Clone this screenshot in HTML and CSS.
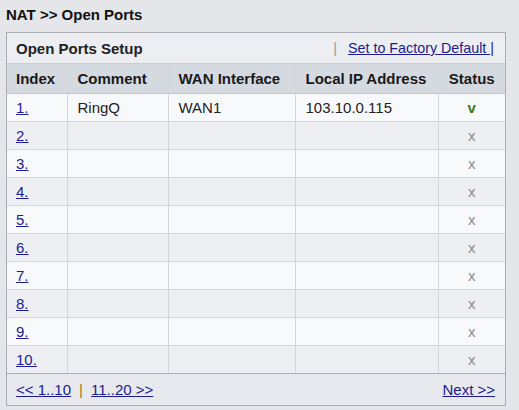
FILE: index.html
```html
<!DOCTYPE html>
<html lang="en">
<head>
	<meta charset="UTF-8">
	<title>NAT - Open Ports</title>
	<link rel="stylesheet" href="styles.css">
</head>
<body>
<h1 class="title">NAT &gt;&gt; Open Ports</h1>
<div class="panel">
	<div class="panel-head">
		<span class="panel-name">Open Ports Setup</span>
		<span class="panel-tools"><span class="sep">|</span><a href="#">Set to Factory Default |</a></span>
	</div>
	<table class="ports">
		<thead>
			<tr>
				<th class="c-idx">Index</th>
				<th class="c-cmt">Comment</th>
				<th class="c-wan">WAN Interface</th>
				<th class="c-ip">Local IP Address</th>
				<th class="c-st">Status</th>
			</tr>
		</thead>
		<tbody>
			<tr><td class="c-idx"><a href="#">1.</a></td><td>RingQ</td><td>WAN1</td><td>103.10.0.115</td><td class="c-st on">v</td></tr>
			<tr><td class="c-idx"><a href="#">2.</a></td><td></td><td></td><td></td><td class="c-st">x</td></tr>
			<tr><td class="c-idx"><a href="#">3.</a></td><td></td><td></td><td></td><td class="c-st">x</td></tr>
			<tr><td class="c-idx"><a href="#">4.</a></td><td></td><td></td><td></td><td class="c-st">x</td></tr>
			<tr><td class="c-idx"><a href="#">5.</a></td><td></td><td></td><td></td><td class="c-st">x</td></tr>
			<tr><td class="c-idx"><a href="#">6.</a></td><td></td><td></td><td></td><td class="c-st">x</td></tr>
			<tr><td class="c-idx"><a href="#">7.</a></td><td></td><td></td><td></td><td class="c-st">x</td></tr>
			<tr><td class="c-idx"><a href="#">8.</a></td><td></td><td></td><td></td><td class="c-st">x</td></tr>
			<tr><td class="c-idx"><a href="#">9.</a></td><td></td><td></td><td></td><td class="c-st">x</td></tr>
			<tr><td class="c-idx"><a href="#">10.</a></td><td></td><td></td><td></td><td class="c-st">x</td></tr>
		</tbody>
	</table>
	<div class="panel-foot">
		<span class="pager"><a href="#">&lt;&lt; 1..10</a><span class="bar">|</span><a href="#">11..20 &gt;&gt;</a></span>
		<a href="#">Next &gt;&gt;</a>
	</div>
</div>
</body>
</html>
```

FILE: styles.css
```css
* {
	margin: 0;
	padding: 0;
	box-sizing: border-box;
}
body {
	background: #e4e6ea;
	font-family: "Liberation Sans", Arial, sans-serif;
	font-size: 15px;
	color: #222;
	padding: 6px 6px;
}
a {
	color: #1c1c8e;
	text-decoration: underline;
}
.title {
	font-size: 15px;
	font-weight: bold;
	line-height: 17px;
	color: #111;
	margin-bottom: 9px;
}
.panel {
	width: 500px;
	border: 1px solid #a9adb4;
	background: #eceef2;
}
.panel-head {
	height: 31px;
	display: flex;
	align-items: center;
	justify-content: space-between;
	padding: 0 11px 0 9px;
	border-bottom: 1px solid #c9ccd2;
}
.panel-name {
	font-weight: bold;
}
.panel-tools {
	font-size: 14.3px;
}
.panel-tools .sep {
	color: #999;
	margin-right: 11px;
}
.ports {
	width: 100%;
	border-collapse: collapse;
	table-layout: fixed;
}
.ports th,
.ports td {
	text-align: left;
	border-right: 1px solid #d3d6db;
	border-bottom: 1px solid #d3d6db;
	padding: 0 10px;
	white-space: nowrap;
}
.ports th:last-child,
.ports td:last-child {
	border-right: none;
}
.ports th {
	height: 29px;
	background: #d5d9e0;
	font-weight: bold;
	color: #1a1a1a;
	border-bottom-color: #c4c8cf;
}
.ports td {
	height: 28px;
}
.ports tbody tr:nth-child(odd) {
	background: #f8f9fb;
}
.ports tbody tr:nth-child(even) {
	background: #eeeff2;
}
.ports tbody tr:last-child td {
	border-bottom: 1px solid #a9adb4;
}
.c-idx { width: 60px; padding-left: 9px !important; }
.c-cmt { width: 101px; }
.c-wan { width: 127px; }
.c-ip { width: 143px; }
.ports .c-st {
	text-align: center;
	padding: 0;
}
.ports td.c-st {
	color: #8a8a8a;
}
.ports td.on {
	color: #3c7a17;
	font-weight: bold;
}
.panel-foot {
	height: 31px;
	display: flex;
	align-items: center;
	justify-content: space-between;
	padding: 0 10px 0 9px;
	background: #e8e9ee;
}
.pager .bar {
	color: #a0761e;
	margin: 0 8px;
}
```
